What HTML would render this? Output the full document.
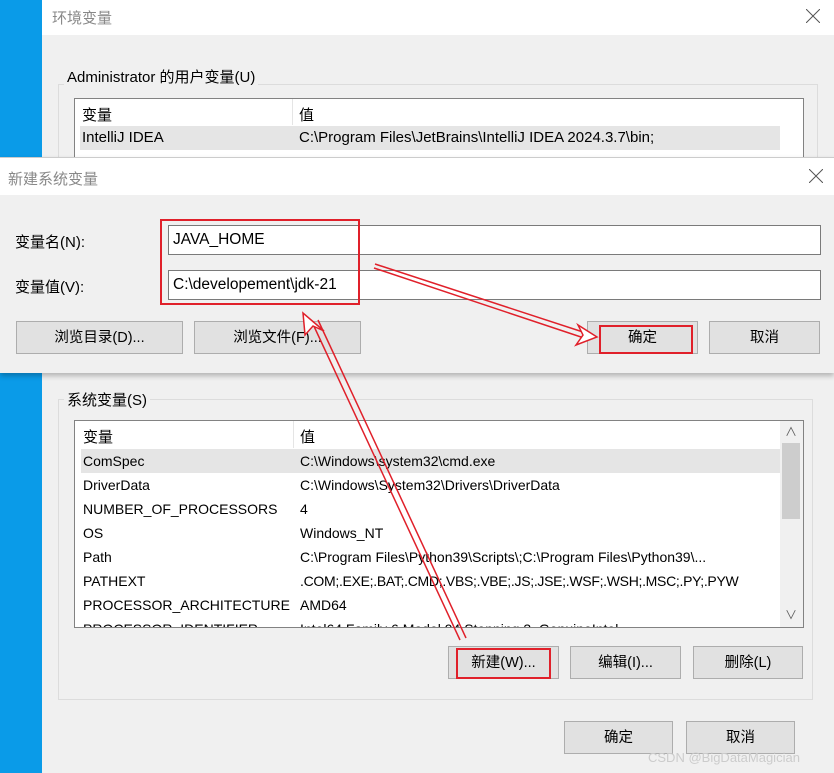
<!DOCTYPE html><html><head><meta charset="utf-8"><style>
*{margin:0;padding:0;box-sizing:border-box}
body{width:834px;height:773px;overflow:hidden;position:relative;background:#f0f0f0;font-family:"Liberation Sans","Noto Sans CJK SC",sans-serif;font-size:15px;color:#000}
.a{position:absolute}
.btn{position:absolute;background:#e1e1e1;border:1px solid #adadad;text-align:center;font-size:14.5px;line-height:32px}
.inp{position:absolute;background:#fff;border:1px solid #7a7a7a;font-size:15.5px;padding-left:4px;line-height:27px}
.row{position:absolute;left:6px;width:700px;height:24px;line-height:24px;font-size:14px}
.row span{position:absolute;left:2px}.row b{font-weight:normal;position:absolute;left:219px;white-space:nowrap}
</style></head><body>
<div class="a" style="left:0;top:0;width:42px;height:773px;background:#0a9be8"></div>
<div class="a" style="left:42px;top:0;width:792px;height:35px;background:#fff"></div>
<div class="a" style="left:52px;top:7px;color:#888;font-size:15px">环境变量</div>
<svg class="a" style="left:806px;top:9px" width="14" height="14"><path d="M0 0L14 14M14 0L0 14" stroke="#555" stroke-width="1"/></svg>
<div class="a" style="left:58px;top:84px;width:760px;height:90px;border:1px solid #dcdcdc"></div>
<div class="a" style="left:64px;top:66px;background:#f0f0f0;padding:0 3px;font-size:15px">Administrator 的用户变量(U)</div>
<div class="a" style="left:74px;top:98px;width:730px;height:70px;background:#fff;border:1px solid #828282"></div>
<div class="a" style="left:292px;top:99px;width:1px;height:26px;background:#e5e5e5"></div>
<div class="a" style="left:82px;top:104px">变量</div><div class="a" style="left:299px;top:104px">值</div>
<div class="a" style="left:80px;top:126px;width:700px;height:24px;background:#e5e5e5"></div>
<div class="a" style="left:82px;top:129px">IntelliJ IDEA</div><div class="a" style="left:299px;top:129px">C:\Program Files\JetBrains\IntelliJ IDEA 2024.3.7\bin;</div>

<!-- front dialog -->
<div class="a" style="left:0;top:157px;width:834px;height:216px;background:#f0f0f0;border-top:1px solid #ccc;box-shadow:0 3px 5px rgba(0,0,0,.25)"></div>
<div class="a" style="left:0;top:158px;width:834px;height:37px;background:#fff"></div>
<div class="a" style="left:8px;top:168px;color:#888">新建系统变量</div>
<svg class="a" style="left:809px;top:169px" width="14" height="14"><path d="M0 0L14 14M14 0L0 14" stroke="#555" stroke-width="1"/></svg>
<div class="a" style="left:15px;top:231px">变量名(N):</div>
<div class="a" style="left:15px;top:276px">变量值(V):</div>
<div class="inp" style="left:168px;top:225px;width:653px;height:30px">JAVA_HOME</div>
<div class="inp" style="left:168px;top:270px;width:653px;height:30px">C:\developement\jdk-21</div>
<div class="a" style="left:160px;top:219px;width:200px;height:86px;border:2px solid #e0202a"></div>
<div class="btn" style="left:16px;top:321px;width:167px;height:33px">浏览目录(D)...</div>
<div class="btn" style="left:194px;top:321px;width:167px;height:33px">浏览文件(F)...</div>
<div class="btn" style="left:587px;top:321px;width:111px;height:33px">确定</div>
<div class="a" style="left:599px;top:325px;width:94px;height:29px;border:2px solid #e0202a"></div>
<div class="btn" style="left:709px;top:321px;width:111px;height:33px">取消</div>

<!-- system vars -->
<div class="a" style="left:58px;top:399px;width:755px;height:301px;border:1px solid #dcdcdc"></div>
<div class="a" style="left:64px;top:389px;background:#f0f0f0;padding:0 3px">系统变量(S)</div>
<div class="a" style="left:74px;top:420px;width:730px;height:208px;background:#fff;border:1px solid #828282;overflow:hidden">
<div class="a" style="left:218px;top:0;width:1px;height:27px;background:#e5e5e5"></div>
<div class="a" style="left:8px;top:5px">变量</div><div class="a" style="left:225px;top:5px">值</div>
<div class="row" style="top:28px;background:#e5e5e5"><span>ComSpec</span><b>C:\Windows\system32\cmd.exe</b></div>
<div class="row" style="top:52px"><span>DriverData</span><b>C:\Windows\System32\Drivers\DriverData</b></div>
<div class="row" style="top:76px"><span>NUMBER_OF_PROCESSORS</span><b>4</b></div>
<div class="row" style="top:100px"><span>OS</span><b>Windows_NT</b></div>
<div class="row" style="top:124px"><span>Path</span><b>C:\Program Files\Python39\Scripts\;C:\Program Files\Python39\...</b></div>
<div class="row" style="top:148px"><span>PATHEXT</span><b style="letter-spacing:-0.3px">.COM;.EXE;.BAT;.CMD;.VBS;.VBE;.JS;.JSE;.WSF;.WSH;.MSC;.PY;.PYW</b></div>
<div class="row" style="top:172px"><span>PROCESSOR_ARCHITECTURE</span><b>AMD64</b></div>
<div class="row" style="top:196px"><span>PROCESSOR_IDENTIFIER</span><b>Intel64 Family 6 Model 94 Stepping 3, GenuineIntel</b></div>
<div class="a" style="left:705px;top:0;width:24px;height:208px;background:#f0f0f0"></div>
<div class="a" style="left:707px;top:22px;width:18px;height:76px;background:#cdcdcd"></div>
<div class="a" style="left:710px;top:2px;color:#606060;font-size:12px">∧</div>
<div class="a" style="left:710px;top:185px;color:#606060;font-size:12px">∨</div>
</div>
<div class="btn" style="left:448px;top:646px;width:111px;height:33px">新建(W)...</div>
<div class="a" style="left:456px;top:648px;width:95px;height:31px;border:2px solid #e0202a"></div>
<div class="btn" style="left:570px;top:646px;width:111px;height:33px">编辑(I)...</div>
<div class="btn" style="left:693px;top:646px;width:110px;height:33px">删除(L)</div>
<div class="btn" style="left:564px;top:721px;width:109px;height:33px">确定</div>
<div class="btn" style="left:686px;top:721px;width:109px;height:33px">取消</div>
<div class="a" style="left:648px;top:750px;color:#ccc;font-size:13px">CSDN @BigDataMagician</div>

<svg class="a" style="left:0;top:0" width="834" height="773">
<g fill="none" stroke="#e0202a" stroke-width="1.5">
<line x1="375" y1="264" x2="586" y2="333"/><line x1="374" y1="268" x2="584" y2="338"/>
<polygon points="597,337 578,325 583,335 576,345" fill="#fff"/>
<line x1="460" y1="640" x2="312" y2="322"/><line x1="466" y1="638" x2="318" y2="320"/>
<polygon points="303,313 305,335 313,326 324,331" fill="#fff"/>
</g></svg>
</body></html>
